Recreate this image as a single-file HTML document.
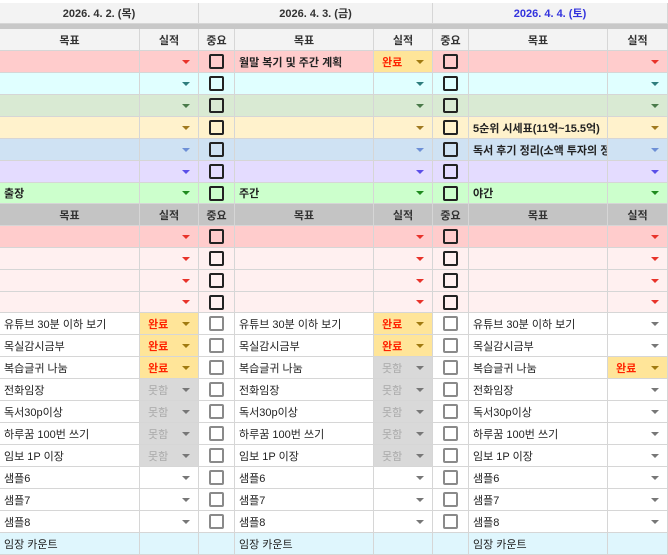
<!DOCTYPE html>
<html><head><meta charset="utf-8"><style>
*{box-sizing:border-box;margin:0;padding:0}
body{width:668px;height:553px;overflow:hidden;background:#fff;font-family:"Liberation Sans","Noto Sans CJK KR",sans-serif;font-size:11px;color:#222;position:relative}
.r{position:absolute;left:0;width:668px;display:flex}
.c{position:relative;border-right:1px solid #d6d6d6;border-bottom:1px solid #d6d6d6;white-space:nowrap;overflow:hidden;padding-left:4px;display:flex;align-items:center}
.w1{width:140px}.w2{width:59px}.w3{width:36px}.w4{width:139px}.w5{width:59px}.w6{width:36px}.w7{width:139px}.w8{width:60px}
.h .c{justify-content:center;padding:0;font-weight:bold;color:#333}
.a::after{content:"";position:absolute;right:8px;top:50%;margin-top:-2px;border-left:4px solid transparent;border-right:4px solid transparent;border-top:4px solid var(--ac,#777)}
.cb{justify-content:center;padding:0}
.cb i{display:block;width:15px;height:15px;border:2px solid #222;border-radius:2px}
.cb.g i{border-color:#8a8a8a}
.ok{background:#ffe599;color:#ff2200;font-weight:bold;padding-left:8px}
.no{background:#d9d9d9;color:#aaa;padding-left:8px}
.bd{font-weight:bold}
</style></head><body>
<div class="r" style="top:0;height:3px;background:#fff"></div>
<div class="r h" style="top:3px;height:21px;background:#f3f3f3">
 <div class="c" style="width:199px">2026. 4. 2. (목)</div><div class="c" style="width:234px">2026. 4. 3. (금)</div><div class="c" style="width:235px;color:#3333dd">2026. 4. 4. (토)</div>
</div>
<div class="r" style="top:24px;height:5px;background:#c8c8c8"></div>
<div class="r h" style="top:29px;height:22px;background:#f3f3f3">
 <div class="c w1">목표</div><div class="c w2">실적</div><div class="c w3">중요</div><div class="c w4">목표</div><div class="c w5">실적</div><div class="c w6">중요</div><div class="c w7">목표</div><div class="c w8">실적</div>
</div>

<div class="r" style="top:51px;height:22px;background:#ffcccc;--ac:#e8332a">
 <div class="c w1"></div><div class="c w2 a"></div><div class="c w3 cb"><i></i></div><div class="c w4 bd">월말 복기 및 주간 계획</div><div class="c w5 a ok" style="--ac:#a07a10">완료</div><div class="c w6 cb"><i></i></div><div class="c w7"></div><div class="c w8 a"></div>
</div>
<div class="r" style="top:73px;height:22px;background:#e0ffff;--ac:#2e7d7d">
 <div class="c w1"></div><div class="c w2 a"></div><div class="c w3 cb"><i></i></div><div class="c w4"></div><div class="c w5 a"></div><div class="c w6 cb"><i></i></div><div class="c w7"></div><div class="c w8 a"></div>
</div>
<div class="r" style="top:95px;height:22px;background:#d9ead3;--ac:#4a7a4a">
 <div class="c w1"></div><div class="c w2 a"></div><div class="c w3 cb"><i></i></div><div class="c w4"></div><div class="c w5 a"></div><div class="c w6 cb"><i></i></div><div class="c w7"></div><div class="c w8 a"></div>
</div>
<div class="r" style="top:117px;height:22px;background:#fff2cc;--ac:#a07a20">
 <div class="c w1"></div><div class="c w2 a"></div><div class="c w3 cb"><i></i></div><div class="c w4"></div><div class="c w5 a"></div><div class="c w6 cb"><i></i></div><div class="c w7 bd">5순위 시세표(11억~15.5억)</div><div class="c w8 a"></div>
</div>
<div class="r" style="top:139px;height:22px;background:#cfe2f3;--ac:#6d8fd6">
 <div class="c w1"></div><div class="c w2 a"></div><div class="c w3 cb"><i></i></div><div class="c w4"></div><div class="c w5 a"></div><div class="c w6 cb"><i></i></div><div class="c w7 bd">독서 후기 정리(소액 투자의 정석)</div><div class="c w8 a"></div>
</div>
<div class="r" style="top:161px;height:22px;background:#e4dcff;--ac:#5b4ee8">
 <div class="c w1"></div><div class="c w2 a"></div><div class="c w3 cb"><i></i></div><div class="c w4"></div><div class="c w5 a"></div><div class="c w6 cb"><i></i></div><div class="c w7"></div><div class="c w8 a"></div>
</div>
<div class="r" style="top:183px;height:21px;background:#ccffcc;--ac:#1e8b1e">
 <div class="c w1 bd">출장</div><div class="c w2 a"></div><div class="c w3 cb"><i></i></div><div class="c w4 bd">주간</div><div class="c w5 a"></div><div class="c w6 cb"><i></i></div><div class="c w7 bd">야간</div><div class="c w8 a"></div>
</div>
<div class="r h" style="top:204px;height:22px;background:#c4c4c4">
 <div class="c w1">목표</div><div class="c w2">실적</div><div class="c w3">중요</div><div class="c w4">목표</div><div class="c w5">실적</div><div class="c w6">중요</div><div class="c w7">목표</div><div class="c w8">실적</div>
</div>
<div class="r" style="top:226px;height:22px;background:#ffcccc;--ac:#e8332a">
 <div class="c w1"></div><div class="c w2 a"></div><div class="c w3 cb"><i></i></div><div class="c w4"></div><div class="c w5 a"></div><div class="c w6 cb"><i></i></div><div class="c w7"></div><div class="c w8 a"></div>
</div>
<div class="r" style="top:248px;height:22px;background:#fff0f0;--ac:#e8332a">
 <div class="c w1"></div><div class="c w2 a"></div><div class="c w3 cb"><i></i></div><div class="c w4"></div><div class="c w5 a"></div><div class="c w6 cb"><i></i></div><div class="c w7"></div><div class="c w8 a"></div>
</div>
<div class="r" style="top:270px;height:22px;background:#fff0f0;--ac:#e8332a">
 <div class="c w1"></div><div class="c w2 a"></div><div class="c w3 cb"><i></i></div><div class="c w4"></div><div class="c w5 a"></div><div class="c w6 cb"><i></i></div><div class="c w7"></div><div class="c w8 a"></div>
</div>
<div class="r" style="top:292px;height:21px;background:#fff0f0;--ac:#e8332a">
 <div class="c w1"></div><div class="c w2 a"></div><div class="c w3 cb"><i></i></div><div class="c w4"></div><div class="c w5 a"></div><div class="c w6 cb"><i></i></div><div class="c w7"></div><div class="c w8 a"></div>
</div>

<div class="r" style="top:313px;height:22px;--ac:#a07a10">
 <div class="c w1">유튜브 30분 이하 보기</div><div class="c w2 a ok">완료</div><div class="c w3 cb g"><i></i></div><div class="c w4">유튜브 30분 이하 보기</div><div class="c w5 a ok">완료</div><div class="c w6 cb g"><i></i></div><div class="c w7">유튜브 30분 이하 보기</div><div class="c w8 a" style="--ac:#777"></div>
</div>
<div class="r" style="top:335px;height:22px;--ac:#a07a10">
 <div class="c w1">목실감시금부</div><div class="c w2 a ok">완료</div><div class="c w3 cb g"><i></i></div><div class="c w4">목실감시금부</div><div class="c w5 a ok">완료</div><div class="c w6 cb g"><i></i></div><div class="c w7">목실감시금부</div><div class="c w8 a" style="--ac:#777"></div>
</div>
<div class="r" style="top:357px;height:22px;--ac:#777">
 <div class="c w1">복습글귀 나눔</div><div class="c w2 a ok" style="--ac:#a07a10">완료</div><div class="c w3 cb g"><i></i></div><div class="c w4">복습글귀 나눔</div><div class="c w5 a no">못함</div><div class="c w6 cb g"><i></i></div><div class="c w7">복습글귀 나눔</div><div class="c w8 a ok" style="--ac:#a07a10">완료</div>
</div>
<div class="r" style="top:379px;height:22px;--ac:#777">
 <div class="c w1">전화임장</div><div class="c w2 a no">못함</div><div class="c w3 cb g"><i></i></div><div class="c w4">전화임장</div><div class="c w5 a no">못함</div><div class="c w6 cb g"><i></i></div><div class="c w7">전화임장</div><div class="c w8 a"></div>
</div>
<div class="r" style="top:401px;height:22px;--ac:#777">
 <div class="c w1">독서30p이상</div><div class="c w2 a no">못함</div><div class="c w3 cb g"><i></i></div><div class="c w4">독서30p이상</div><div class="c w5 a no">못함</div><div class="c w6 cb g"><i></i></div><div class="c w7">독서30p이상</div><div class="c w8 a"></div>
</div>
<div class="r" style="top:423px;height:22px;--ac:#777">
 <div class="c w1">하루꿈 100번 쓰기</div><div class="c w2 a no">못함</div><div class="c w3 cb g"><i></i></div><div class="c w4">하루꿈 100번 쓰기</div><div class="c w5 a no">못함</div><div class="c w6 cb g"><i></i></div><div class="c w7">하루꿈 100번 쓰기</div><div class="c w8 a"></div>
</div>
<div class="r" style="top:445px;height:22px;--ac:#777">
 <div class="c w1">임보 1P 이장</div><div class="c w2 a no">못함</div><div class="c w3 cb g"><i></i></div><div class="c w4">임보 1P 이장</div><div class="c w5 a no">못함</div><div class="c w6 cb g"><i></i></div><div class="c w7">임보 1P 이장</div><div class="c w8 a"></div>
</div>
<div class="r" style="top:467px;height:22px;--ac:#777">
 <div class="c w1">샘플6</div><div class="c w2 a"></div><div class="c w3 cb g"><i></i></div><div class="c w4">샘플6</div><div class="c w5 a"></div><div class="c w6 cb g"><i></i></div><div class="c w7">샘플6</div><div class="c w8 a"></div>
</div>
<div class="r" style="top:489px;height:22px;--ac:#777">
 <div class="c w1">샘플7</div><div class="c w2 a"></div><div class="c w3 cb g"><i></i></div><div class="c w4">샘플7</div><div class="c w5 a"></div><div class="c w6 cb g"><i></i></div><div class="c w7">샘플7</div><div class="c w8 a"></div>
</div>
<div class="r" style="top:511px;height:22px;--ac:#777">
 <div class="c w1">샘플8</div><div class="c w2 a"></div><div class="c w3 cb g"><i></i></div><div class="c w4">샘플8</div><div class="c w5 a"></div><div class="c w6 cb g"><i></i></div><div class="c w7">샘플8</div><div class="c w8 a"></div>
</div>
<div class="r" style="top:533px;height:22px;background:#dff6fd">
 <div class="c w1">임장 카운트</div><div class="c w2"></div><div class="c w3"></div><div class="c w4">임장 카운트</div><div class="c w5"></div><div class="c w6"></div><div class="c w7">임장 카운트</div><div class="c w8"></div>
</div>
</body></html>
